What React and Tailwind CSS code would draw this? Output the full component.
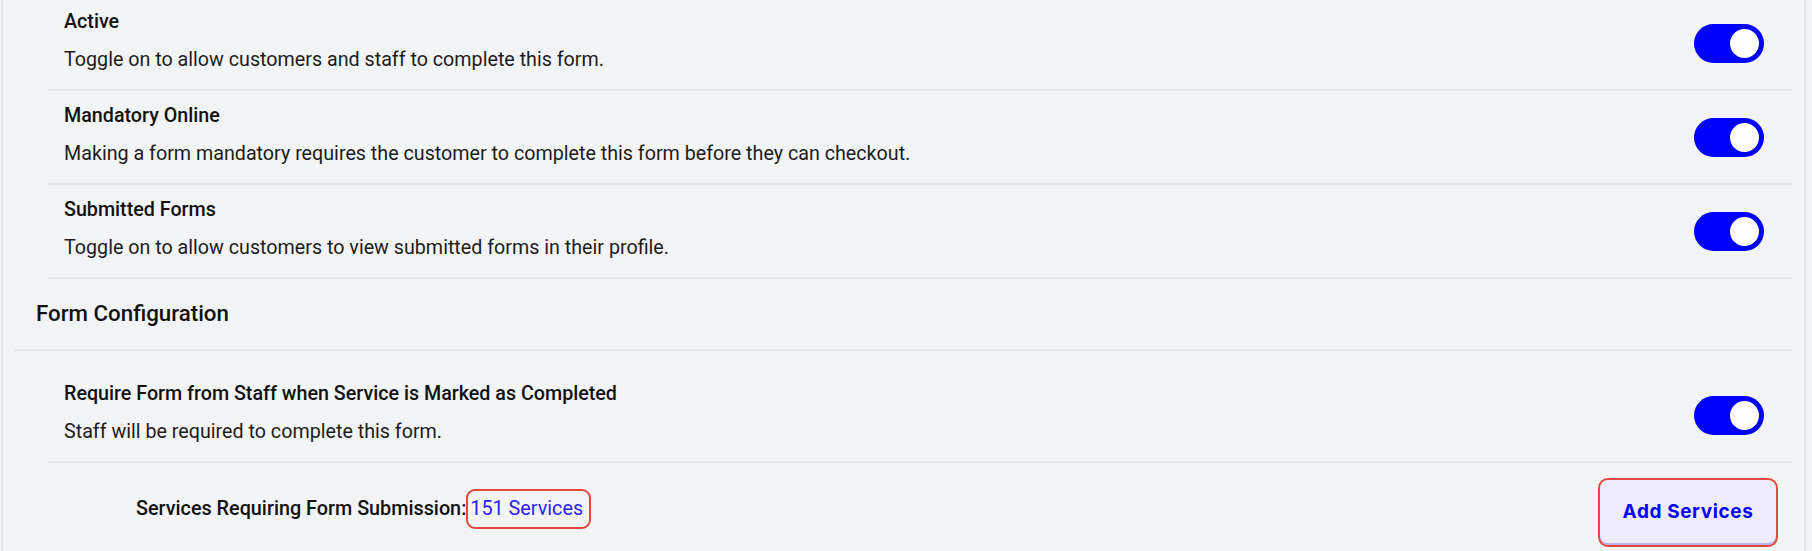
import { useState } from 'react';

const rows = [
  { id: 'active', title: 'Active', desc: 'Toggle on to allow customers and staff to complete this form.' },
  {
    id: 'mandatory',
    title: 'Mandatory Online',
    desc: 'Making a form mandatory requires the customer to complete this form before they can checkout.',
  },
  { id: 'submitted', title: 'Submitted Forms', desc: 'Toggle on to allow customers to view submitted forms in their profile.' },
];

const Toggle = ({ on, onChange }) => (
  <button
    onClick={() => onChange(!on)}
    className={`mt-[4px] flex h-[39px] w-[70px] shrink-0 items-center rounded-full px-[3px] ${
      on ? 'justify-end bg-[#0000ff]' : 'justify-start bg-[#c9cbd1]'
    }`}
  >
    <span className="h-[33px] w-[33px] rounded-full border-2 border-[#0000ff] bg-white" />
  </button>
);

const SettingRow = ({ title, desc, on, onChange, top = 'pt-[13px]' }) => (
  <div className={`ml-[45px] mr-[11px] flex items-center justify-between border-b-2 border-[#e7e8eb] pb-[17px] pl-4 pr-[29px] ${top}`}>
    <div className="flex flex-col gap-[14px]">
      <h3 className="text-[19.7px] leading-6 font-medium text-[#111]">{title}</h3>
      <p className="text-[19.7px] leading-6 text-[#1c1c1c]">{desc}</p>
    </div>
    <Toggle on={on} onChange={onChange} />
  </div>
);

const App = () => {
  const [toggles, setToggles] = useState({ active: true, mandatory: true, submitted: true, staff: true });
  const set = (key) => (val) => setToggles((t) => ({ ...t, [key]: val }));

  return (
    <div className="h-[551px] overflow-hidden bg-[#f3f4f6] font-['Roboto',sans-serif]">
      <div className="-mt-[3px] mr-[6px] ml-[1px] h-[600px] border-x-2 border-[#e6e7ea]">
        {rows.map((r) => (
          <SettingRow key={r.id} title={r.title} desc={r.desc} on={toggles[r.id]} onChange={set(r.id)} />
        ))}

        <div className="ml-[11px] mr-[11px] border-b-2 border-[#e7e8eb] pt-5 pb-[22px] pl-[22px]">
          <h2 className="text-[22.3px] leading-7 font-medium text-[#111]">Form Configuration</h2>
        </div>

        <SettingRow
          title="Require Form from Staff when Service is Marked as Completed"
          desc="Staff will be required to complete this form."
          on={toggles.staff}
          onChange={set('staff')}
          top="pt-[31px]"
        />

        <div className="ml-[45px] mr-[11px] flex items-center justify-between pt-[15px] pr-[15px] pl-[88px]">
          <p className="mb-[7px] text-[19.8px] leading-6 font-medium text-[#111]">
            Services Requiring Form Submission:
            <a
              href="#"
              className="inline-block rounded-[9px] border-[2.5px] border-[#e0483a] py-[6px] pr-[6px] pl-[2px] font-normal text-[#2f22f5]"
            >
              151 Services
            </a>
          </p>
          <button className="flex h-[69px] w-[180px] items-center justify-center rounded-[10px] border-[2.5px] border-[#e0483a] bg-[#eeecfd] shadow-[inset_0_-2px_0_#b9b5f5] font-['Inter',sans-serif] text-[19px] font-bold tracking-[0.6px] text-[#0000ff]">
            Add Services
          </button>
        </div>
      </div>
    </div>
  );
};

export default App;
